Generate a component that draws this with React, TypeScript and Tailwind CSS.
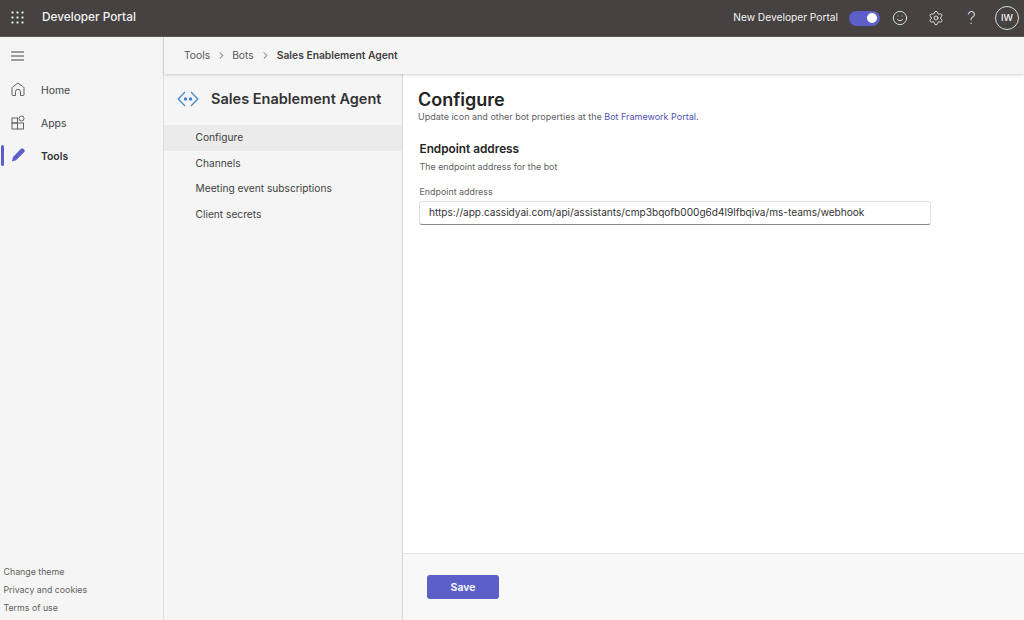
import { ChevronRight, Settings, Smile } from "lucide-react";

function Grid() {
  return (
    <svg width="14" height="14" viewBox="0 0 14 14" fill="#f5f5f5">
      {[1.5, 6.5, 11.5].map((y) =>
        [1.5, 6.5, 11.5].map((x) => <rect key={`${x}-${y}`} x={x - 1} y={y - 1} width="2" height="2" rx="0.4" />)
      )}
    </svg>
  );
}

function BotIcon() {
  return (
    <svg width="22" height="16" viewBox="0 0 22 16" fill="none" stroke="#3f86c9" strokeWidth="1.2">
      <path d="M8 1 1.200 8 8 15" />
      <path d="M14 1l6.800 7L14 15" />
      <circle cx="8.500" cy="8" r="1.700" fill="#3f86c9" stroke="none" />
      <circle cx="13.500" cy="8" r="1.700" fill="#3f86c9" stroke="none" />
    </svg>
  );
}

function HomeIcon() {
  return (
    <svg width="14" height="15" viewBox="0 0 14 15" fill="none" stroke="#616161" strokeWidth="1">
      <path
        d="M1 12.500V6.200c0-.5.200-.9.600-1.200L7 1l5.400 4c.4.300.6.700.6 1.200v6.300c0 .6-.4 1-1 1H9.500V9.800a2.500 2.500 0 0 0-5 0v3.700H2c-.6 0-1-.4-1-1z"
        strokeLinejoin="round"
      />
    </svg>
  );
}

function AppsIcon() {
  return (
    <svg width="15" height="15" viewBox="0 0 15 15" fill="none" stroke="#616161" strokeWidth="1">
      <rect x="1" y="3" width="5.500" height="5" />
      <rect x="1" y="8" width="5.500" height="6" />
      <rect x="6.500" y="8" width="6" height="6" />
      <rect x="8" y="1" width="5" height="5" rx="2.500" />
    </svg>
  );
}

function PencilIcon() {
  return (
    <svg width="14" height="14" viewBox="0 0 14 14" fill="#5b5fc7">
      <path d="M9.800.9a1.900 1.900 0 0 1 2.700 0l.6.600a1.900 1.900 0 0 1 0 2.700L5 12.300 1 13.500 2 9z" />
    </svg>
  );
}

function NavItem({ icon, label, active }: { icon: React.ReactNode; label: string; active?: boolean }) {
  return (
    <div className="relative flex items-center h-[33px] pl-[11px]">
      {active && <div className="absolute left-[1px] top-[5px] w-[3px] h-[21px] rounded-full bg-[#5b5fc7]" />}
      <div className="w-[30px] flex -mt-[3px]">{icon}</div>
      <span className={active ? "text-[10.400px] font-semibold text-[#333]" : "text-[10.400px] text-[#444]"}>{label}</span>
    </div>
  );
}

function Toggle() {
  return (
    <div className="w-[31px] h-[15px] rounded-full bg-[#5b5fc7] flex items-center justify-end pr-[3px]">
      <div className="w-[10px] h-[10px] rounded-full bg-white" />
    </div>
  );
}

function SubItem({ label, active }: { label: string; active?: boolean }) {
  return (
    <div className={`h-[25.500px] flex items-center pl-[31.500px] text-[10.200px] text-[#424242] ${active ? "bg-[#ebebeb]" : ""}`}>
      {label}
    </div>
  );
}

export default function App() {
  return (
    <div className="w-[1024px] h-[620px] flex flex-col overflow-hidden bg-[#f5f5f5] font-['Inter',sans-serif]">
      <header className="h-[37px] shrink-0 bg-[#464241] flex items-center border-b border-[#5a5655]">
        <div className="w-[42px] pl-[11px] flex">
          <Grid />
        </div>
        <span className="text-[11.800px] font-medium text-[#f0f0f0]">Developer Portal</span>
        <div className="ml-auto flex items-center text-[#f2f2f2]">
          <span className="text-[10.200px] mr-[11px]">New Developer Portal</span>
          <Toggle />
          <Smile size={16} strokeWidth={1.300} className="ml-[12px]" />
          <Settings size={16} strokeWidth={1.300} className="ml-[20px]" />
          <span className="ml-[22px] text-[17px] leading-[20px] font-extralight w-[11px] text-center">?</span>
          <div className="ml-[18px] mr-[5px] w-[24px] h-[24px] rounded-full border border-[#ddd] flex items-center justify-center text-[9.500px] font-medium">
            IW
          </div>
        </div>
      </header>
      <div className="flex flex-1 min-h-0">
        <aside className="w-[164px] shrink-0 border-r border-[#e0e0e0] flex flex-col">
          <div className="h-[37px] flex items-center pl-[11px]">
            <svg width="13" height="10" viewBox="0 0 13 10" stroke="#444" strokeWidth="1">
              <path d="M0 1h13M0 5h13M0 9h13" />
            </svg>
          </div>
          <div>
            <NavItem icon={<HomeIcon />} label="Home" />
            <NavItem icon={<AppsIcon />} label="Apps" />
            <NavItem icon={<PencilIcon />} label="Tools" active />
          </div>
          <div className="mt-auto pl-[3.500px] pb-[3px] text-[8.800px] text-[#616161] flex flex-col">
            <span className="h-[18px] flex items-center">Change theme</span>
            <span className="h-[18px] flex items-center">Privacy and cookies</span>
            <span className="h-[18px] flex items-center">Terms of use</span>
          </div>
        </aside>
        <div className="flex-1 flex flex-col min-w-0">
          <div className="h-[37px] shrink-0 flex items-center pl-[20px] text-[10.300px] text-[#555] shadow-[0_1px_3px_rgba(0,0,0,0.18)] z-10">
            <span>Tools</span>
            <ChevronRight size={11} className="mx-[5.500px]" />
            <span>Bots</span>
            <ChevronRight size={11} className="mx-[6px]" />
            <span className="font-semibold text-[#424242]">Sales Enablement Agent</span>
          </div>
          <div className="flex flex-1 min-h-0">
            <div className="w-[239px] shrink-0 border-r border-[#d6d6d6]">
              <div className="h-[51px] flex items-center pl-[13px] pb-[2px]">
                <BotIcon />
                <span className="ml-[12px] text-[14.500px] font-semibold text-[#333]">Sales Enablement Agent</span>
              </div>
              <SubItem label="Configure" active />
              <SubItem label="Channels" />
              <SubItem label="Meeting event subscriptions" />
              <SubItem label="Client secrets" />
            </div>
            <div className="flex-1 flex flex-col min-w-0">
              <main className="flex-1 bg-white pl-[15px] pt-[16px]">
                <h1 className="text-[18px] leading-[20px] font-semibold text-[#242424]">Configure</h1>
                <p className="text-[9px] leading-[13px] text-[#616161]">
                  Update icon and other bot properties at the <span className="text-[#4f52b2]">Bot Framework Portal.</span>
                </p>
                <div className="pl-[1.500px] mt-[18px]">
                  <h2 className="text-[11.800px] leading-[16px] font-semibold text-[#242424]">Endpoint address</h2>
                  <p className="text-[8.900px] leading-[12px] mt-[4px] text-[#616161]">The endpoint address for the bot</p>
                  <label className="block text-[8.900px] leading-[12px] mt-[13px] text-[#616161]">Endpoint address</label>
                  <div className="mt-[3px] -ml-[1px] w-[512px] h-[24px] flex items-center pl-[9.500px] rounded-[3px] bg-white border border-[#e0e0e0] border-b-[#8a8a8a] text-[10.100px] text-[#333]">
                    https://app.cassidyai.com/api/assistants/cmp3bqofb000g6d4l9lfbqiva/ms-teams/webhook
                  </div>
                </div>
              </main>
              <footer className="h-[67px] shrink-0 bg-[#f8f8f8] border-t border-[#e6e6e6] flex items-center pl-[24px]">
                <button className="w-[72px] h-[24px] pt-[1px] rounded-[3px] bg-[#5b5fc7] text-white text-[10.500px] font-semibold">
                  Save
                </button>
              </footer>
            </div>
          </div>
        </div>
      </div>
    </div>
  );
}
